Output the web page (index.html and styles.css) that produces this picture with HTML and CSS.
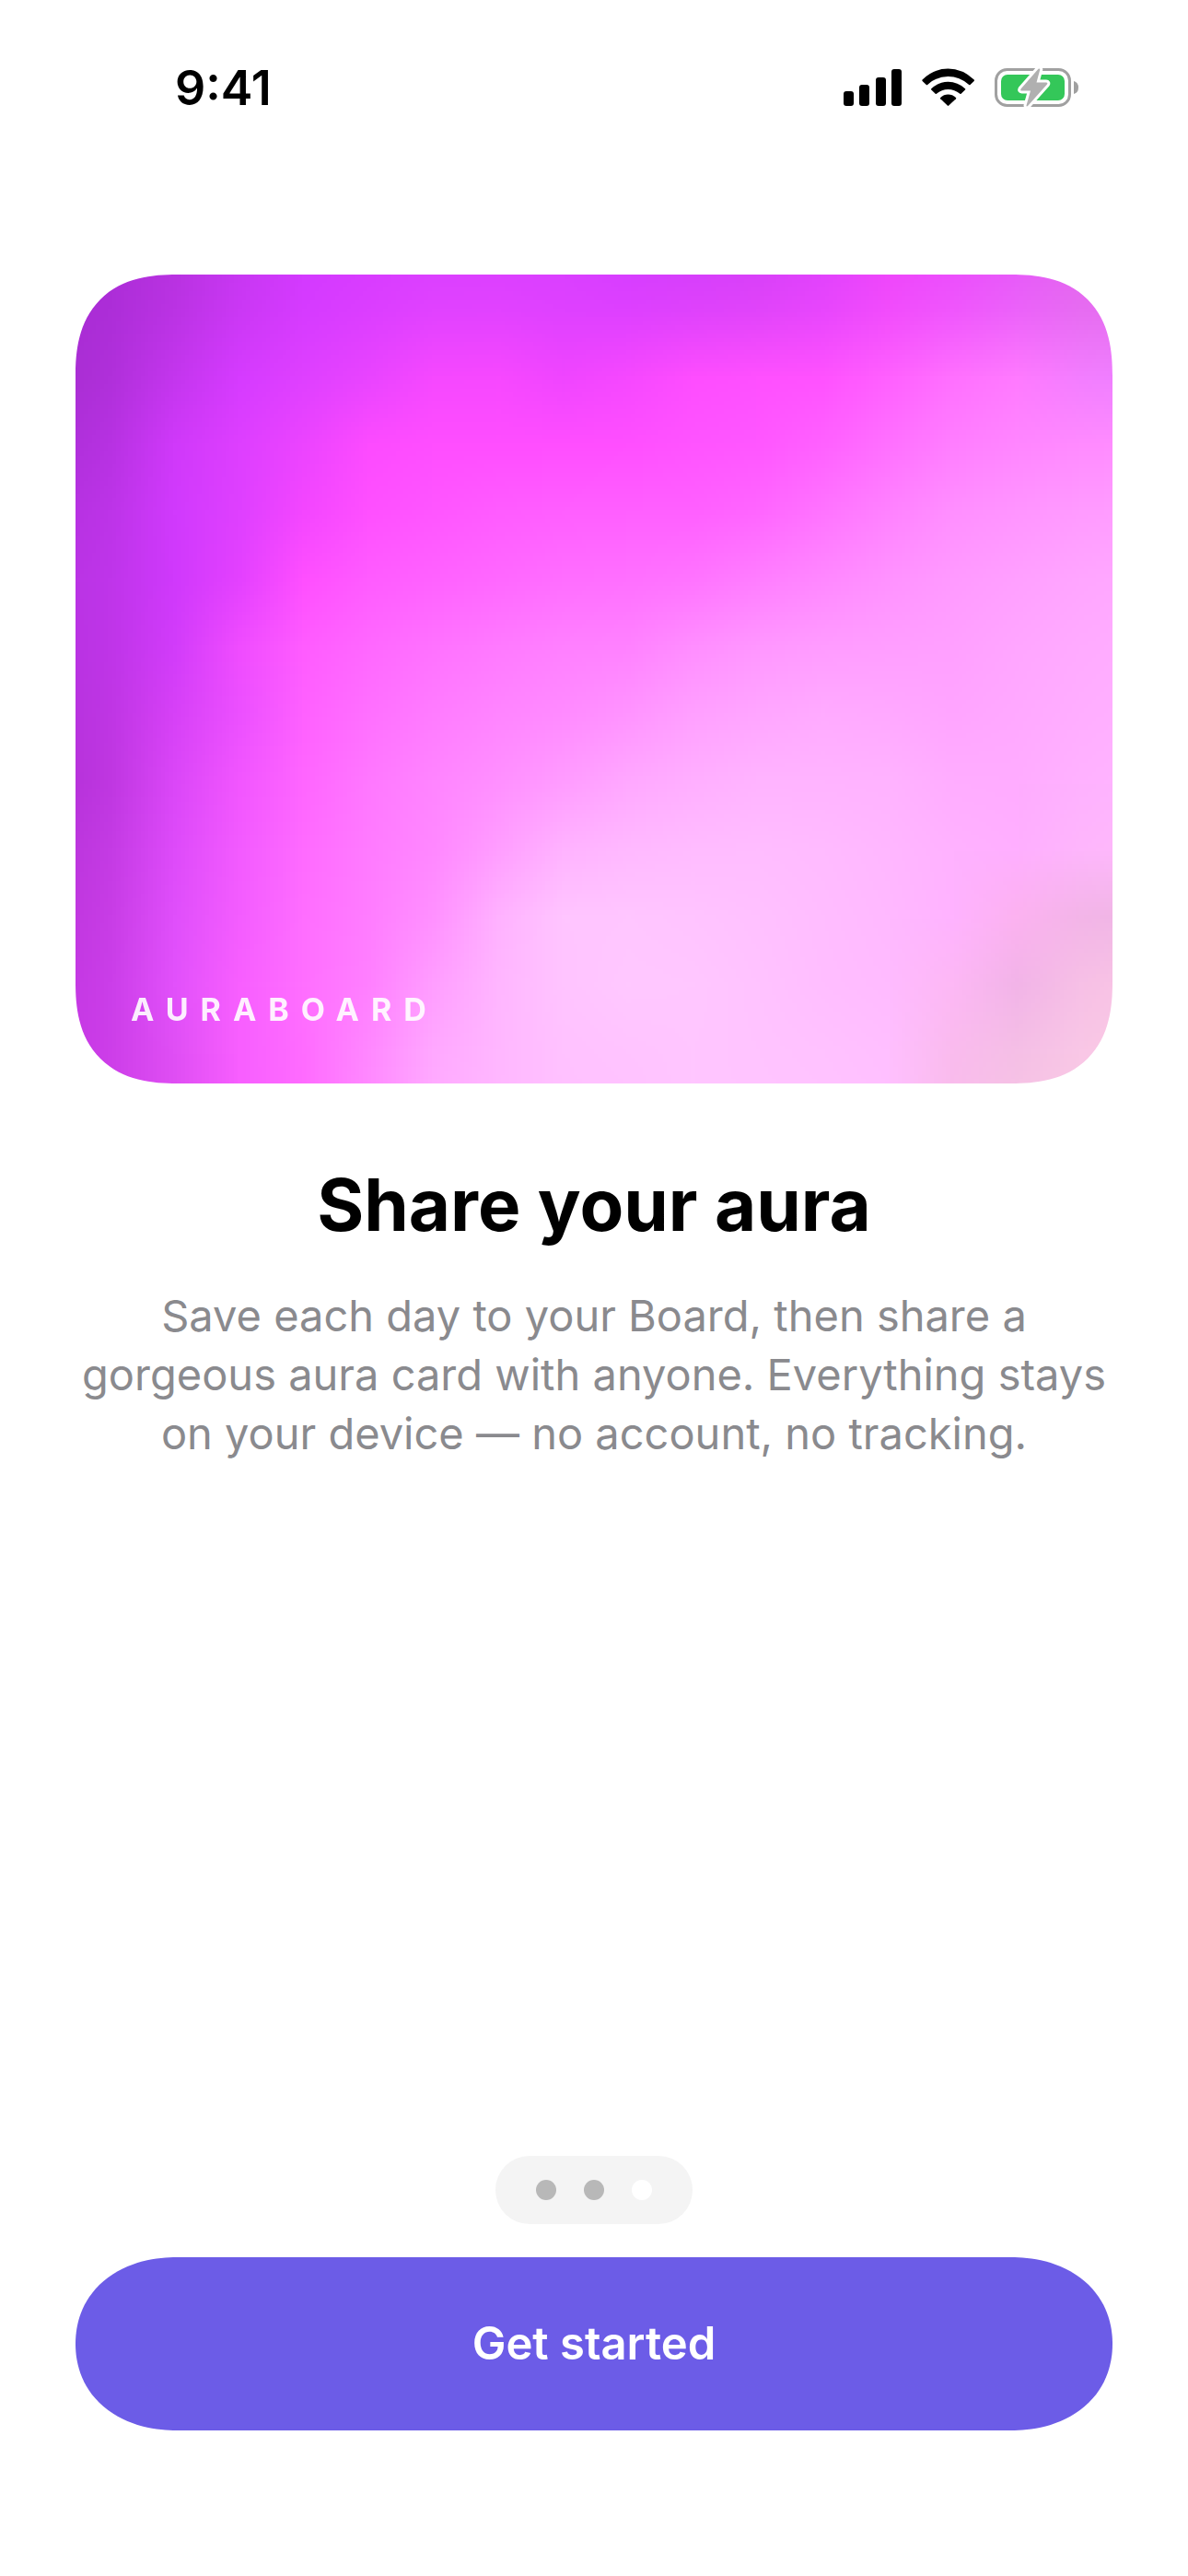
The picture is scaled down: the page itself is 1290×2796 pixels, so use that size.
FILE: index.html
```html
<!DOCTYPE html>
<html lang="en">
<head>
    <meta charset="UTF-8">
    <meta name="viewport" content="width=device-width, initial-scale=1.0">
    <title>Auraboard</title>
    <link rel="stylesheet" href="styles.css">
</head>
<body>
    <header class="status-bar">
        <span class="time">9:41</span>
        <svg class="status-icons" viewBox="0 0 256 44" width="256" height="44" aria-hidden="true">
            <!-- signal -->
            <rect x="0" y="25" width="11" height="16" rx="3"/>
            <rect x="17" y="18" width="11" height="23" rx="3"/>
            <rect x="35" y="10" width="11" height="31" rx="3"/>
            <rect x="52" y="1" width="11" height="40" rx="3"/>
            <!-- wifi -->
            <path d="M85.600 12.500Q98 .5 113.500 .5T141.700 12.500Q142.300 13.200 141.700 13.900L137.500 18Q136.900 18.500 136.200 17.900Q126 9 113.500 9T91.100 17.900Q90.400 18.500 89.800 18L85.600 13.900Q85 13.200 85.600 12.500Z"/>
            <path d="M95.300 22.300Q103 14.800 113.500 14.800T132 22.300Q132.600 22.900 132 23.500L127.600 27.700Q127 28.300 126.400 27.700Q120.500 23 113.500 23T100.900 27.700Q100.300 28.300 99.700 27.700L95.300 23.500Q94.700 22.900 95.300 22.300Z"/>
            <path d="M105.200 32Q108.800 28.600 113.500 28.600T122 32Q122.600 32.600 122 33.200L114.200 40.600Q113.500 41.200 112.800 40.600L105.200 33.200Q104.600 32.600 105.200 32Z"/>
            <!-- battery, charging -->
            <rect x="165.500" y="1.500" width="80" height="39" rx="12" fill="none" stroke="#a0a0a0" stroke-width="3"/>
            <rect x="171" y="7" width="69" height="28" rx="7" fill="#34c759"/>
            <path d="M250 14Q255 15.500 255 21T250 28Z" fill="#a0a0a0"/>
            <path d="M211.500 .8L192.500 22.500Q191.500 24.500 193.500 24.500H203L198.500 40.500Q198.500 42 200 41L221 17.500Q222 15.500 220 15.500H209.500L213.300 1.500Q213 0 211.500 .8Z" fill="#b0b0b0" stroke="#fff" stroke-width="6" stroke-linejoin="round" paint-order="stroke"/>
        </svg>
    </header>

    <main class="page">
        <section class="aura-card">
            <canvas id="aura" class="aura-mesh"></canvas>
            <span class="aura-label">AURABOARD</span>
        </section>
        <h1 class="title">Share your aura</h1>
        <p class="description">Save each day to your Board, then share a gorgeous aura card with anyone. Everything stays on your device — no account, no tracking.</p>
    </main>

    <footer class="footer">
        <nav class="pager" aria-label="Pages">
            <button class="dot" aria-label="Page 1"></button>
            <button class="dot" aria-label="Page 2"></button>
            <button class="dot active" aria-label="Page 3" aria-current="true"></button>
        </nav>
        <button class="btn">Get started</button>
    </footer>

    <script src="aura.js"></script>
</body>
</html>
```

FILE: styles.css
```css
* {
    box-sizing: border-box;
}
body {
    margin: 0;
    min-height: 100vh;
    display: flex;
    flex-direction: column;
    background-color: #fff;
    color: #000;
    font-family: Inter, "Liberation Sans", sans-serif;
}
button {
    border: none;
    padding: 0;
    font-family: inherit;
    cursor: pointer;
}
.status-bar {
    display: flex;
    justify-content: space-between;
    align-items: center;
    padding: 64px 118px 0 190px;
}
.time {
    font-size: 52px;
    line-height: 64px;
    font-weight: 600;
}
.status-icons {
    display: block;
}
.page {
    flex: 1;
    padding: 170px 82px 0;
    text-align: center;
}
.aura-card {
    display: flex;
    position: relative;
    align-items: flex-end;
    aspect-ratio: 1126 / 878;
    padding: 60px;
    border-radius: 90px;
    overflow: hidden;
}
/* the mesh is 16 x 12 cells plus a ring of one cell that is cut off */
.aura-mesh {
    position: absolute;
    top: calc(-100% / 12);
    left: calc(-100% / 16);
    width: calc(100% * 18 / 16);
    height: calc(100% * 14 / 12);
}
.aura-label {
    position: relative;
    color: rgba(255, 255, 255, 0.9);
    font-size: 34px;
    line-height: 40px;
    font-weight: 700;
    letter-spacing: 13px;
}
.title {
    margin: 82px 0 0;
    font-size: 78px;
    line-height: 100px;
    font-weight: 700;
}
.description {
    margin: 38px 0 0;
    color: #8a8a8e;
    font-size: 47px;
    line-height: 64px;
}
.footer {
    display: flex;
    flex-direction: column;
    align-items: center;
    gap: 36px;
    padding: 0 82px 158px;
}
.pager {
    display: flex;
    gap: 30px;
    padding: 26px 44px;
    border-radius: 37px;
    background-color: #f4f4f4;
}
.dot {
    width: 22px;
    height: 22px;
    border-radius: 50%;
    background-color: #b8b8b8;
}
.dot.active {
    background-color: #fff;
}
.btn {
    width: 100%;
    padding: 62px 0;
    border-radius: 94px;
    background-color: #6c5ce7;
    color: #fff;
    font-size: 49px;
    line-height: 64px;
    font-weight: 600;
}
/* smoother corners where the browser has them */
@supports (corner-shape: squircle) {
    .aura-card {
        border-radius: 110px;
        corner-shape: superellipse(1.3);
    }
    .btn {
        border-radius: 110px / 94px;
        corner-shape: superellipse(1.1);
    }
}
```

FILE: aura.js
```js
// One colour per mesh point, left to right and top to bottom.
// The browser blends between them when the canvas is stretched over the card.
const mesh = [
    'ad2ed8 bb33e4 cb38f5 d63bff dc3eff e142ff e242ff df41ff de40ff df42fc e144fa e846fd f24cfc f056fd ec62fa e76cf2',
    'b030da c436ee d63bff df40ff e944ff f648ff f748ff f045ff f648ff fe4dff ff50ff ff52ff ff60ff ff70ff ff7aff f37eff',
    'b732e2 d039fa de3fff ec44ff fd4bff ff4eff ff4eff ff4eff ff4fff ff54ff ff57ff ff61ff ff70ff ff7eff ff86ff ff8bff',
    'bd34e8 d13afd df40ff f446ff ff50ff ff56ff ff5cff ff5fff ff60ff ff60ff ff66ff ff74ff ff82ff ff8fff ff95ff ff9bff',
    'bf35ea d039fc e441ff ff4fff ff5cff ff62ff ff68ff ff6eff ff70ff ff74ff ff7eff ff88ff ff92ff ff9aff ffa0ff ffa6ff',
    'bf35e8 d23cfa f04cff ff5cff ff68ff ff72ff ff7aff ff80ff ff82ff ff8eff ff97ff ff9cff ff9eff ffa0ff ffa6ff ffabff',
    'bf36e4 d741f7 ec50ff ff61ff ff70ff ff7cff ff85ff ff8bff ff94ff ffa0ff ffa6ff ffabff ffa9ff ffa5ff ffa9ff ffaeff',
    'bf37e1 db47f8 f256ff ff66ff ff78ff ff85ff ff90ff ff9cff ffa8ff ffafff ffb4ff ffb4ff ffb3ff ffadff ffacff ffb2ff',
    'c43be4 de4bfa f35bff ff6bff ff7bff ff88ff ff9eff ffb3ff ffb9ff ffbcff ffbdff ffbbff ffb7ff ffb2ff ffafff feb6fc',
    'c83de6 e04ffb f45dff ff6eff ff7dff ff91ff ffb2ff ffc5ff ffc6ff ffc4ff ffc1ff ffbdff ffb9ff ffb3ff fcb2f0 f3b5e8',
    'cb3ee9 e251fb f85fff ff6fff ff80ff ff9eff ffb6ff ffc4ff ffc8ff ffc7ff ffc3ff ffbeff ffbbff fdb8f5 f2b4e8 f7c0e6',
    'cd3ee9 e04ff5 f85fff ff6cff ff88ff ffa8ff ffb7ff ffc2ff ffc4ff ffc6ff ffc4ff ffc2ff ffbfff fabbee f5bfe6 f9c7e6'
].map(row => row.split(' ').map(hex => [0, 2, 4].map(i => parseInt(hex.slice(i, i + 2), 16))));

// Continue a line of points by one at each end
function extend(points, next) {
    const n = points.length;
    return [next(points[0], points[1]), ...points, next(points[n - 1], points[n - 2])];
}

// half the last step, so the edges do not get too dark
const nextColor = (a, b) => a.map((v, i) => Math.max(0, Math.min(255, Math.round(v + (v - b[i]) / 2))));
const nextRow = (a, b) => a.map((color, i) => nextColor(color, b[i]));
const grid = extend(mesh.map(row => extend(row, nextColor)), nextRow);

const canvas = document.getElementById('aura');
canvas.width = grid[0].length;
canvas.height = grid.length;

const ctx = canvas.getContext('2d');
grid.forEach((row, y) => {
    row.forEach((color, x) => {
        ctx.fillStyle = `rgb(${color.join(', ')})`;
        ctx.fillRect(x, y, 1, 1);
    });
});
```
